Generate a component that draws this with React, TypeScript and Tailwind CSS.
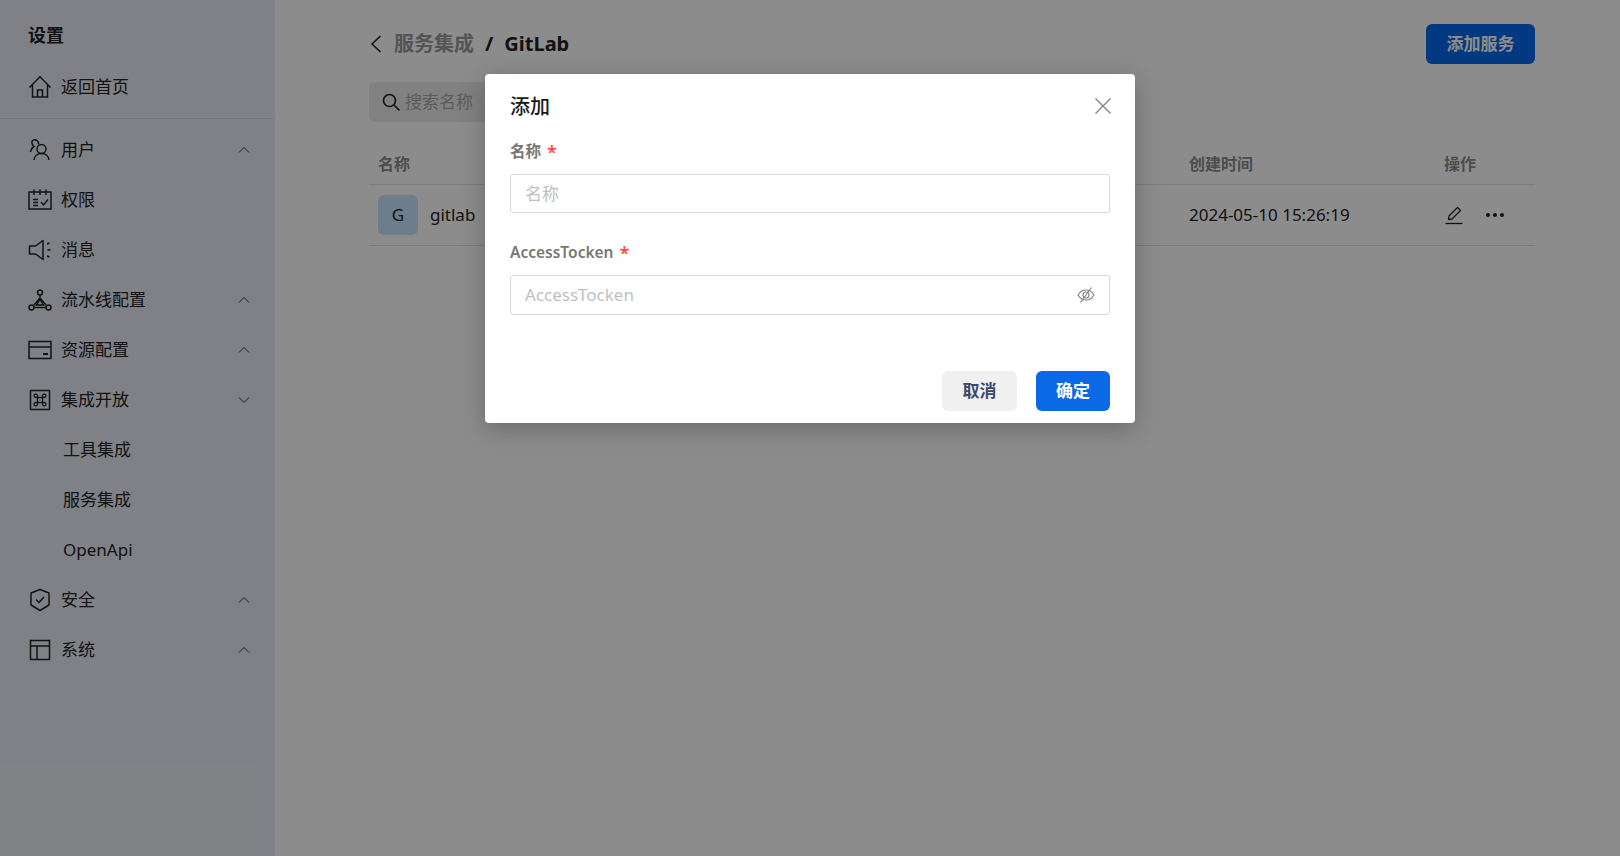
import type { ReactNode } from "react";

const font = "font-['Noto_Sans','Noto_Sans_CJK_SC',sans-serif]";

function Svg({ children, className = "" }: { children: ReactNode; className?: string }) {
  return (
    <svg
      viewBox="0 0 24 24"
      fill="none"
      stroke="currentColor"
      strokeWidth="1.5"
      className={`w-6 h-6 shrink-0 ${className}`}
    >
      {children}
    </svg>
  );
}

const HomeIcon = () => (
  <Svg>
    <path d="M1.5 12.5 12 1.8l10.5 10.7M4.5 10v12h15V10M9.5 22v-7h5v7" />
  </Svg>
);
const UserIcon = () => (
  <Svg>
    <circle cx="13.5" cy="11" r="4.5" />
    <path d="M6 22c.4-4 3.4-6.6 7.5-6.6S20.600 18 21 22" />
    <path d="M10.800 6.500C10.800 3.500 8.500 1.500 6.500 1.700 4.500 1.900 3.500 3.600 4 5.500c.3 1.300 1 2.300 2 3-2 1.300-3.200 3-3.800 5.500" />
  </Svg>
);
const BoardIcon = () => (
  <Svg>
    <path d="M1 4h22v17H1zM6 1.500V7M12 1.500V7M18 1.500V7" />
    <path d="M5 11.500h5M5 14.500h5M5 17.500h5M13 14l2.500 3 4.500-5.500" strokeWidth="1.300" />
  </Svg>
);
const SoundIcon = () => (
  <Svg>
    <path d="M15 2.500v19L7.500 16H1.500V8h6z" strokeLinejoin="round" />
    <path d="m19 6 2.500-1M19.500 12h3M19 18l2.500 1" />
  </Svg>
);
const FlowIcon = () => (
  <Svg>
    <circle cx="12" cy="4.500" r="2.500" />
    <circle cx="3.500" cy="19.500" r="2.500" />
    <circle cx="20.500" cy="19.500" r="2.500" />
    <path d="M12 7v3l-6 7M12 10l6 7M6 19.500h12" />
    <path d="M8.500 17 12 11l3.500 6z" />
  </Svg>
);
const CardIcon = () => (
  <Svg>
    <path d="M1 3.500h22v17H1zM1 9h22" />
    <path d="M15 16h5" strokeWidth="2" />
  </Svg>
);
const CommandIcon = () => (
  <Svg>
    <path d="M2.500 2.500h19v19h-19z" />
    <path
      d="M9.500 9.500h5v5h-5zM9.500 9.500V7.800a1.700 1.700 0 1 0-1.700 1.700zM14.500 9.500V7.800a1.700 1.700 0 1 1 1.700 1.700zM9.500 14.500v1.700a1.700 1.700 0 1 1-1.700-1.700zM14.500 14.500v1.700a1.700 1.700 0 1 0 1.700-1.700z"
      strokeWidth="1.300"
    />
  </Svg>
);
const ShieldIcon = () => (
  <Svg>
    <path d="M12 1.500 21 5v12l-9 5.500L3 17V5z" strokeLinejoin="round" />
    <path d="m8 11.500 3 3 5-5.500" />
  </Svg>
);
const PanelIcon = () => (
  <Svg>
    <path d="M2.500 2.500h19v19h-19zM2.500 8h19M9 8v13.500" />
  </Svg>
);

function Chevron({ down = false }: { down?: boolean }) {
  return (
    <svg viewBox="0 0 12 8" fill="none" stroke="currentColor" strokeWidth="1" className="w-3 h-2 text-[#333]">
      <path d={down ? "M1 1.500 6 6.500 11 1.500" : "M1 6.500 6 1.500 11 6.500"} />
    </svg>
  );
}

function NavItem({ icon, label, arrow }: { icon: ReactNode; label: string; arrow?: "up" | "down" }) {
  return (
    <div className="h-[50px] pl-7 pr-[25px] flex items-center text-[#222]">
      <div className="w-[33px]">{icon}</div>
      <span className="flex-1 text-[17px]">{label}</span>
      {arrow && <Chevron down={arrow === "down"} />}
    </div>
  );
}

function SubItem({ label }: { label: string }) {
  return <div className="h-[50px] pl-[63px] flex items-center text-[17px] text-[#222]">{label}</div>;
}

function Sidebar() {
  return (
    <aside className="w-[275px] shrink-0 bg-[#e9ecf4]">
      <div className="h-[30px] mt-5 pl-7 flex items-center text-[18px] font-bold text-[#222]">设置</div>
      <div className="mt-3 pb-[6px] border-b border-[#d8dae0]">
        <NavItem icon={<HomeIcon />} label="返回首页" />
      </div>
      <div className="mt-[6px]">
        <NavItem icon={<UserIcon />} label="用户" arrow="up" />
        <NavItem icon={<BoardIcon />} label="权限" />
        <NavItem icon={<SoundIcon />} label="消息" />
        <NavItem icon={<FlowIcon />} label="流水线配置" arrow="up" />
        <NavItem icon={<CardIcon />} label="资源配置" arrow="up" />
        <NavItem icon={<CommandIcon />} label="集成开放" arrow="down" />
        <SubItem label="工具集成" />
        <SubItem label="服务集成" />
        <SubItem label="OpenApi" />
        <NavItem icon={<ShieldIcon />} label="安全" arrow="up" />
        <NavItem icon={<PanelIcon />} label="系统" arrow="up" />
      </div>
    </aside>
  );
}

function Main() {
  return (
    <main className="flex-1 px-[94px] bg-white">
      <div className="h-10 mt-6 flex items-center justify-between">
        <div className="flex items-center text-[20px] font-bold">
          <svg viewBox="0 0 14 20" fill="none" stroke="#222" strokeWidth="1.500" className="w-[14px] h-5 mr-[12px]">
            <path d="M11.500 2 3 10l8.500 8" />
          </svg>
          <span className="text-[#9a9a9a] ml-[-1px]">服务集成</span>
          <span className="mx-[11px] text-[#222]">/</span>
          <span className="text-[#222]">GitLab</span>
        </div>
        <button className="w-[109px] h-10 rounded-md bg-[#0769e9] text-white text-[17px] font-bold">添加服务</button>
      </div>

      <div className="mt-[18px] w-[300px] h-10 rounded-md bg-[#ebebeb] flex items-center pl-[12px]">
        <svg viewBox="0 0 20 20" fill="none" stroke="#222" strokeWidth="1.700" className="w-5 h-5">
          <circle cx="8.500" cy="8.500" r="6" />
          <path d="m13 13 5.500 5.500" />
        </svg>
        <span className="ml-[4px] text-[17px] text-[#a8a8a8]">搜索名称</span>
      </div>

      <div className="mt-[22px] grid grid-cols-[811px_255px_91px] h-[41px] border-b border-[#e4e4e4] items-center text-[16px] font-bold text-[#8c8c8c] pl-[9px]">
        <span>名称</span>
        <span className="pl-0">创建时间</span>
        <span>操作</span>
      </div>
      <div className="grid grid-cols-[811px_255px_91px] h-[61px] border-b border-[#e4e4e4] items-center pl-[9px] text-[#222] text-[17px]">
        <div className="flex items-center gap-3">
          <div className="w-10 h-10 rounded-md bg-[#c8e3ff] flex items-center justify-center text-[#222]">G</div>
          <span>gitlab</span>
        </div>
        <span>2024-05-10 15:26:19</span>
        <div className="flex items-center gap-[22px]">
          <svg viewBox="0 0 20 20" fill="none" stroke="#222" strokeWidth="1.300" className="w-5 h-5">
            <path d="M4.500 14.500 5 11 13.500 2.500 16.500 5.500 8 14z" strokeLinejoin="round" />
            <path d="M1.500 18.500h17" />
          </svg>
          <div className="flex gap-[3px]">
            <span className="w-1 h-1 rounded-full bg-[#222]" />
            <span className="w-1 h-1 rounded-full bg-[#222]" />
            <span className="w-1 h-1 rounded-full bg-[#222]" />
          </div>
        </div>
      </div>
    </main>
  );
}

function Label({ text }: { text: string }) {
  return (
    <div className="flex items-center h-6 text-[15.500px] font-semibold text-[#777]">
      <span>{text}</span>
      <span className="ml-[6px] text-[#ff4d4f] text-[18px] leading-none">*</span>
    </div>
  );
}

function Modal() {
  return (
    <div className="absolute left-[485px] top-[74px] w-[650px] h-[349px] rounded-sm bg-white shadow-[0_6px_24px_rgba(0,0,0,0.25)] px-[25px]">
      <div className="h-[67px] flex items-center justify-between pb-[1px]">
        <span className="text-[20px] font-medium text-[#1a1a1a]">添加</span>
        <svg viewBox="0 0 16 16" fill="none" stroke="#808080" strokeWidth="1.300" className="w-4 h-4 -mr-[1px] mb-[2px]">
          <path d="m0.500 0.500 15 15M15.500 0.500l-15 15" />
        </svg>
      </div>
      <div className="-mt-[1px]">
        <div className="-mt-[1px]"><Label text="名称" /></div>
        <div className="mt-[10px] h-[39px] rounded-[3px] border border-[#d9d9d9] flex items-center px-[14px] text-[17px] text-[#bfbfbf]">
          名称
        </div>
      </div>
      <div className="mt-[28px]">
        <Label text="AccessTocken" />
        <div className="mt-[10px] h-10 rounded-[3px] border border-[#d9d9d9] flex items-center justify-between pl-[14px] pr-[14px] text-[17px] text-[#bfbfbf]">
          <span>AccessTocken</span>
          <svg viewBox="0 0 18 18" fill="none" stroke="#808080" strokeWidth="1.100" className="w-[18px] h-[18px]">
            <path d="M1 9c2-3.500 4.800-5 8-5s6 1.500 8 5c-2 3.500-4.800 5-8 5s-6-1.500-8-5z" />
            <circle cx="9" cy="9" r="3" />
            <path d="M14.500 1.500 3.500 16.500" />
          </svg>
        </div>
      </div>
      <div className="mt-[56px] flex justify-end gap-[19px]">
        <button className="w-[75px] h-10 rounded-md bg-[#f0f0f0] text-[#3b4a6b] text-[17px] font-bold">取消</button>
        <button className="w-[74px] h-10 rounded-md bg-[#0b68e6] text-white text-[17px] font-bold">确定</button>
      </div>
    </div>
  );
}

export default function App() {
  return (
    <div className={`relative w-[1620px] h-[856px] overflow-hidden flex ${font}`}>
      <Sidebar />
      <Main />
      {/* mask + dialog */}
      <div className="absolute inset-0 bg-black/45" />
      <Modal />
    </div>
  );
}
